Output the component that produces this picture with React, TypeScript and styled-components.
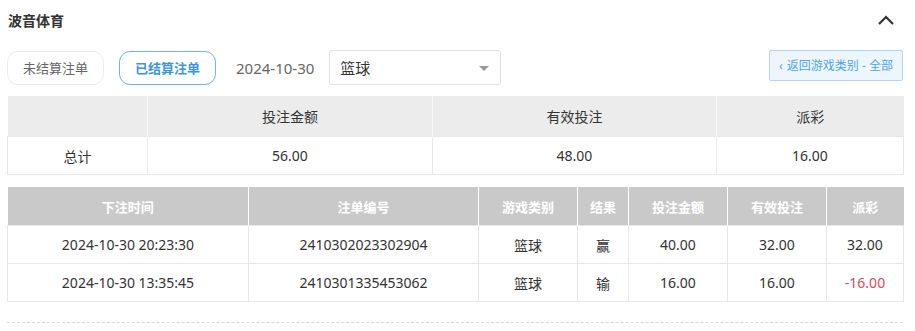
import React from 'react'
import styled, { createGlobalStyle } from 'styled-components'

const GlobalStyle = createGlobalStyle`
  body {
    margin: 0;
    background: #fff;
    font-family: 'Noto Sans', 'Noto Sans CJK SC', sans-serif;
    color: #333;
  }
`

const Page = styled.div`
  width: 896px;
  padding: 0 12px 0 7px;
`

const TitleBar = styled.div`
  height: 40px;
  display: flex;
  align-items: center;
  justify-content: space-between;
  padding-left: 1px;
`

const Title = styled.div`
  font-size: 14px;
  font-weight: bold;
  color: #333;
`

const Toggle = styled.svg`
  width: 18px;
  height: 12px;
  margin-right: 8px;
`

const Toolbar = styled.div`
  margin-top: 10px;
  display: flex;
  align-items: center;
  height: 35px;
`

const TabButton = styled.div<{ $active?: boolean }>`
  box-sizing: border-box;
  width: 97px;
  height: 34px;
  border-radius: 11px;
  border: 1px solid ${(p) => (p.$active ? '#6fb3e8' : '#ececec')};
  color: ${(p) => (p.$active ? '#3d95dc' : '#666')};
  font-weight: ${(p) => (p.$active ? 'bold' : 'normal')};
  font-size: 13px;
  display: flex;
  align-items: center;
  justify-content: center;
  margin-right: 15px;
`

const DateText = styled.div`
  font-size: 15px;
  color: #666;
  margin-left: 5px;
  margin-right: 15px;
`

const Select = styled.div`
  box-sizing: border-box;
  width: 172px;
  height: 35px;
  border: 1px solid #e2e2e2;
  border-radius: 3px;
  display: flex;
  align-items: center;
  justify-content: space-between;
  padding: 0 11px 0 10px;
  font-size: 15px;
  color: #333;
`

const Caret = styled.span`
  width: 0;
  height: 0;
  border-left: 5px solid transparent;
  border-right: 5px solid transparent;
  border-top: 5px solid #999;
  margin-top: 2px;
`

const BackButton = styled.div`
  box-sizing: border-box;
  margin-left: auto;
  margin-top: -5px;
  height: 31px;
  width: 134px;
  background: #eef6fd;
  border: 1px solid #b3d7f3;
  border-radius: 2px;
  color: #4ea5e3;
  font-size: 12px;
  display: flex;
  align-items: center;
  justify-content: center;
  gap: 4px;
`

const Table = styled.table<{ $top: number }>`
  width: 896px;
  border-collapse: collapse;
  margin-top: ${(p) => p.$top}px;
  table-layout: fixed;
  font-size: 14px;
  color: #333;
`

const SumHead = styled.th`
  height: 40px;
  padding: 0;
  background: #ececec;
  font-weight: normal;
  border-right: 1px solid #f8f8f8;
  &:last-child {
    border-right: none;
  }
`

const DetailHead = styled.th`
  height: 38px;
  padding: 0;
  background: #c9c9c9;
  color: #fff;
  font-weight: bold;
  font-size: 13px;
  border-right: 1px solid #fff;
  &:last-child {
    border-right: none;
  }
`

const Cell = styled.td<{ $h: number; $red?: boolean }>`
  height: ${(p) => p.$h}px;
  text-align: center;
  border: 1px solid #e8e8e8;
  color: ${(p) => (p.$red ? '#e0475e' : '#333')};
  padding: 0;
`

const Dashed = styled.div`
  margin-top: 20px;
  border-top: 1px dashed #d8d8d8;
`

const summaryCols = [140, 285, 284, 187]
const detailCols = [241, 230, 99, 51, 99, 99, 77]

const bets = [
  { time: '2024-10-30 20:23:30', id: '2410302023302904', game: '篮球', result: '赢', amount: '40.00', valid: '32.00', payout: '32.00' },
  { time: '2024-10-30 13:35:45', id: '2410301335453062', game: '篮球', result: '输', amount: '16.00', valid: '16.00', payout: '-16.00' },
]

export default function App() {
  return (
    <Page>
      <GlobalStyle />
      <TitleBar>
        <Title>波音体育</Title>
        <Toggle viewBox="0 0 18 12">
          <path d="M2 10 L9 3 L16 10" fill="none" stroke="#333" strokeWidth="2.2" />
        </Toggle>
      </TitleBar>
      <Toolbar>
        <TabButton>未结算注单</TabButton>
        <TabButton $active>已结算注单</TabButton>
        <DateText>2024-10-30</DateText>
        <Select>
          <span>篮球</span>
          <Caret />
        </Select>
        <BackButton>
          <span>‹</span>
          <span>返回游戏类别 - 全部</span>
        </BackButton>
      </Toolbar>

      <Table $top={11}>
        <colgroup>
          {summaryCols.map((w, i) => (
            <col key={i} style={{ width: w }} />
          ))}
        </colgroup>
        <thead>
          <tr>
            <SumHead />
            <SumHead>投注金额</SumHead>
            <SumHead>有效投注</SumHead>
            <SumHead>派彩</SumHead>
          </tr>
        </thead>
        <tbody>
          <tr>
            <Cell $h={37}>总计</Cell>
            <Cell $h={37}>56.00</Cell>
            <Cell $h={37}>48.00</Cell>
            <Cell $h={37}>16.00</Cell>
          </tr>
        </tbody>
      </Table>

      <Table $top={12}>
        <colgroup>
          {detailCols.map((w, i) => (
            <col key={i} style={{ width: w }} />
          ))}
        </colgroup>
        <thead>
          <tr>
            <DetailHead>下注时间</DetailHead>
            <DetailHead>注单编号</DetailHead>
            <DetailHead>游戏类别</DetailHead>
            <DetailHead>结果</DetailHead>
            <DetailHead>投注金额</DetailHead>
            <DetailHead>有效投注</DetailHead>
            <DetailHead>派彩</DetailHead>
          </tr>
        </thead>
        <tbody>
          {bets.map((b) => (
            <tr key={b.id}>
              <Cell $h={37}>{b.time}</Cell>
              <Cell $h={37}>{b.id}</Cell>
              <Cell $h={37}>{b.game}</Cell>
              <Cell $h={37}>{b.result}</Cell>
              <Cell $h={37}>{b.amount}</Cell>
              <Cell $h={37}>{b.valid}</Cell>
              <Cell $h={37} $red={b.payout.startsWith('-')}>{b.payout}</Cell>
            </tr>
          ))}
        </tbody>
      </Table>
      <Dashed />
    </Page>
  )
}
